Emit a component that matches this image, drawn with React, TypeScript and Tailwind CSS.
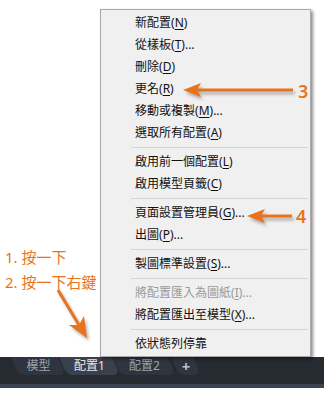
type Item = { t: string; k?: string; dots?: boolean; off?: boolean } | "sep";

const items: Item[] = [
  { t: "新配置", k: "N" },
  { t: "從樣板", k: "T", dots: true },
  { t: "刪除", k: "D" },
  { t: "更名", k: "R" },
  { t: "移動或複製", k: "M", dots: true },
  { t: "選取所有配置", k: "A" },
  "sep",
  { t: "啟用前一個配置", k: "L" },
  { t: "啟用模型頁籤", k: "C" },
  "sep",
  { t: "頁面設置管理員", k: "G", dots: true },
  { t: "出圖", k: "P", dots: true },
  "sep",
  { t: "製圖標準設置", k: "S", dots: true },
  "sep",
  { t: "將配置匯入為圖紙", k: "I", dots: true, off: true },
  { t: "將配置匯出至模型", k: "X", dots: true },
  "sep",
  { t: "依狀態列停靠" },
];

const tabs = [
  { label: "模型", w: "w-[47px]", active: false },
  { label: "配置1", w: "w-[53px]", active: true },
  { label: "配置2", w: "w-[55px]", active: false },
];

const ContextMenu = () => (
  <div className="absolute left-[100px] top-[9px] w-[211px] bg-[#f0f0f0] border border-[#a9a9a9] shadow-[2px_2px_3px_rgba(0,0,0,0.45)] pt-[2px] pb-[1px] text-[12px] leading-none">
    {items.map((it, i) =>
      it === "sep" ? (
        <div key={i} className="h-[7px] flex items-center">
          <div className="ml-[30px] mr-[2px] h-px flex-1 bg-[#d5d5d5]" />
        </div>
      ) : (
        <div key={i} className={`h-[22px] flex items-center pl-[34px] ${it.off ? "text-[#9a9a9a]" : "text-[#111]"}`}>
          <span>{it.t}</span>
          {it.k && (
            <span>
              (<span className="underline underline-offset-[2px]">{it.k}</span>)
            </span>
          )}
          {it.dots && <span>...</span>}
        </div>
      )
    )}
  </div>
);

const Arrows = () => (
  <svg className="absolute left-0 top-0 pointer-events-none" width="333" height="399" viewBox="0 0 333 399">
    <defs>
      <filter id="sh" x="-20%" y="-50%" width="140%" height="200%">
        <feGaussianBlur stdDeviation="1.6" />
      </filter>
    </defs>
    <g fill="#7a7a7a" stroke="#7a7a7a" opacity="0.55" filter="url(#sh)" transform="translate(2 3)">
      <line x1="293" y1="90" x2="196" y2="90" strokeWidth="3" />
      <polygon points="183,90 201,83 197,90 201,97" stroke="none" />
      <line x1="292" y1="216" x2="260" y2="216" strokeWidth="3" />
      <polygon points="247,216 265,209 261,216 265,223" stroke="none" />
      <line x1="58" y1="290" x2="79" y2="325" strokeWidth="3" />
      <polygon points="87,338 69,325 79,325 84,316" stroke="none" />
    </g>
    <g fill="#e8731c" stroke="#e8731c">
      <line x1="293" y1="90" x2="196" y2="90" strokeWidth="3" />
      <polygon points="183,90 201,83 197,90 201,97" stroke="none" />
      <line x1="292" y1="216" x2="260" y2="216" strokeWidth="3" />
      <polygon points="247,216 265,209 261,216 265,223" stroke="none" />
      <line x1="58" y1="290" x2="79" y2="325" strokeWidth="3" />
      <polygon points="87,338 69,325 79,325 84,316" stroke="none" />
    </g>
  </svg>
);

export default function App() {
  return (
    <div
      className="relative w-[333px] h-[399px] bg-white overflow-hidden flex flex-col"
      style={{ fontFamily: '"Noto Sans", "Noto Sans CJK TC", sans-serif' }}
    >
      <div className="flex-1 pt-[245px] pl-[5px] text-[15px] leading-[25px] text-[#e8731c]">
        <div>1. 按一下</div>
        <div>2. 按一下右鍵</div>
      </div>

      <div className="w-[324px] h-[27px] bg-[#262a31] flex items-start pl-[15px] gap-px">
        {tabs.map((t) => (
          <div key={t.label} className={`relative ${t.w} h-[18px] flex items-center justify-center`}>
            <span
              className={`absolute inset-0 skew-x-[22deg] rounded-b-[6px] ${t.active ? "bg-[#3a404c]" : "bg-[#2f343e]"}`}
            />
            <span className={`relative text-[12px] leading-none ${t.active ? "text-[#e8e8e8]" : "text-[#9fa4ac]"}`}>
              {t.label}
            </span>
          </div>
        ))}
        <div className="relative w-[22px] h-[18px] ml-[2px] flex items-center justify-center">
          <span className="absolute inset-0 skew-x-[22deg] rounded-b-[6px] bg-[#2f343e]" />
          <span className="relative text-[15px] font-bold leading-none text-[#bfc3c9]">+</span>
        </div>
      </div>
      <div className="w-[324px] h-[4px] bg-[#3d4350]" />
      <div className="h-[11px]" />

      <ContextMenu />
      <Arrows />
      <span className="absolute left-[298px] top-[79px] text-[18px] font-semibold leading-[24px] text-[#e8731c]">3</span>
      <span className="absolute left-[296px] top-[204px] text-[18px] font-semibold leading-[24px] text-[#e8731c]">4</span>
    </div>
  );
}
